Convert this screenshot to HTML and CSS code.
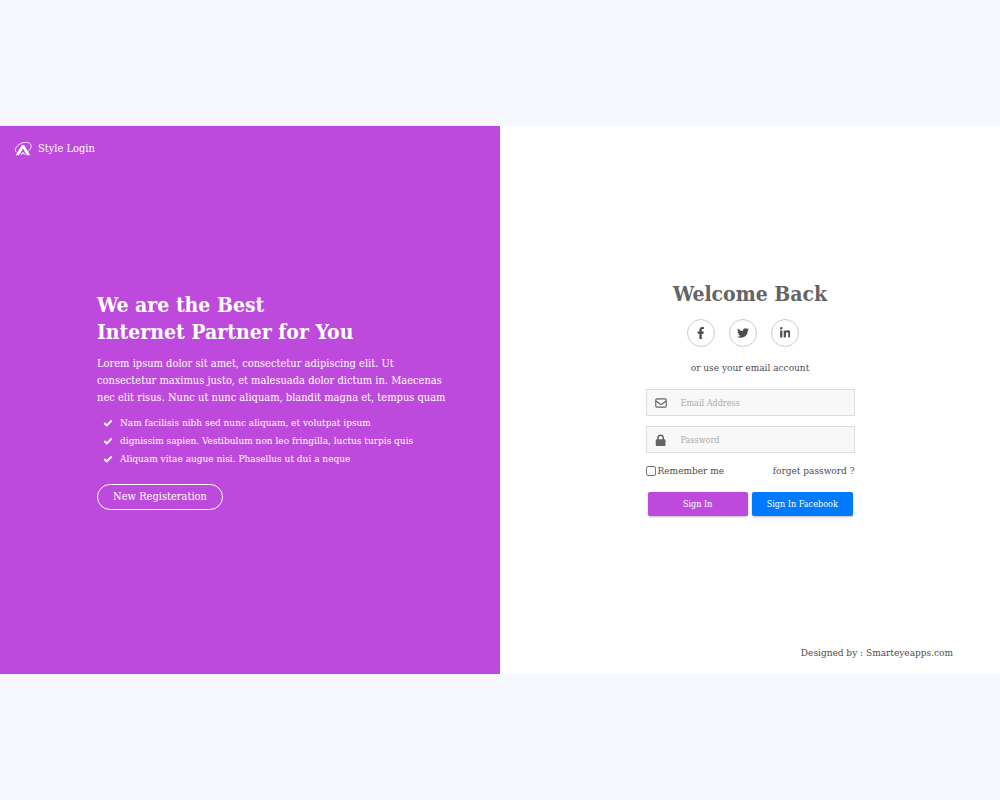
FILE: index.html
```
<!DOCTYPE html>
<html lang="en">
<head>
<meta charset="utf-8">
<meta name="viewport" content="width=device-width, initial-scale=1">
<title>Style Login</title>
<link rel="stylesheet" href="styles.css">
</head>
<body>
<main class="login">
  <section class="intro">
    <div class="brand">
      <svg class="brand-logo" viewBox="0 0 34 28" aria-hidden="true">
        <path d="M3 25 14 7h4l11 18h-6L16 13 9 25zM11 25l5-6 5 6-3-1-2-2-2 2z" fill="currentColor"/>
        <path d="M4 20C-1 14 6 6 15 3c12-3 18 2 15 9-1 3-3 5-5 6" fill="none" stroke="currentColor" stroke-width="1.500"/>
      </svg>
      <span>Style Login</span>
    </div>
    <div class="pitch">
      <h1>We are the Best<br>Internet Partner for You</h1>
      <p class="lead">Lorem ipsum dolor sit amet, consectetur adipiscing elit. Ut<br>consectetur maximus justo, et malesuada dolor dictum in. Maecenas<br>nec elit risus. Nunc ut nunc aliquam, blandit magna et, tempus quam</p>
      <ul class="points">
        <li><svg class="check" viewBox="0 0 16 16" aria-hidden="true"><path d="m2 8 4 4 8-8"/></svg>Nam facilisis nibh sed nunc aliquam, et volutpat ipsum</li>
        <li><svg class="check" viewBox="0 0 16 16" aria-hidden="true"><path d="m2 8 4 4 8-8"/></svg>dignissim sapien. Vestibulum non leo fringilla, luctus turpis quis</li>
        <li><svg class="check" viewBox="0 0 16 16" aria-hidden="true"><path d="m2 8 4 4 8-8"/></svg>Aliquam vitae augue nisi. Phasellus ut dui a neque</li>
      </ul>
      <button class="register" type="button">New Registeration</button>
    </div>
  </section>
  <section class="access">
    <form class="form">
      <h2>Welcome Back</h2>
      <div class="social">
        <a href="#" aria-label="Facebook"><svg viewBox="0 0 320 512"><path d="M279 288l14-93h-89v-60c0-25 12-50 52-50h41V7s-37-7-72-7c-73 0-121 44-121 125v70H23v93h81v224h100V288z"/></svg></a>
        <a href="#" aria-label="Twitter"><svg viewBox="0 0 512 512"><path d="M459.400 151.700c.3 4.500.3 9.100.3 13.600 0 138.700-105.600 298.600-298.600 298.600-59.500 0-114.700-17.200-161.100-47.100 8.400 1 16.600 1.300 25.300 1.300 49.100 0 94.200-16.600 130.300-44.800-46.100-1-84.800-31.200-98.100-72.800 6.500 1 13 1.600 19.800 1.600 9.400 0 18.800-1.300 27.600-3.600-48.100-9.700-84.100-52-84.100-103v-1.300c14 7.800 30.200 12.700 47.400 13.300-28.300-18.800-46.800-51-46.800-87.400 0-19.500 5.200-37.400 14.300-53 51.700 63.700 129.300 105.300 216.400 109.800-1.600-7.800-2.600-15.900-2.600-24 0-57.800 46.800-104.900 104.900-104.900 30.200 0 57.500 12.700 76.700 33.100 23.700-4.500 46.500-13.300 66.600-25.300-7.800 24.400-24.400 44.800-46.100 57.800 21.100-2.300 41.600-8.100 60.400-16.200-14.300 20.800-32.200 39.300-52.600 54.300z"/></svg></a>
        <a href="#" aria-label="LinkedIn"><svg viewBox="0 0 448 512"><path d="M100 448H7V149h93zM54 108a54 54 0 1 1 0-108 54 54 0 0 1 0 108zM448 448h-93V302c0-35-1-79-49-79-48 0-55 38-55 77v148h-93V149h89v41h1c13-24 43-49 88-49 94 0 112 62 112 143z"/></svg></a>
      </div>
      <p class="hint">or use your email account</p>
      <label class="field">
        <svg viewBox="0 0 16 16" aria-hidden="true"><path d="M2.500 2.500h11q1.500 0 1.500 1.500v8q0 1.500-1.500 1.500h-11Q1 13.500 1 12V4q0-1.500 1.500-1.500zM1 5l5 4q2 1.500 4 0l5-4" fill="none" stroke="currentColor" stroke-width="1.500"/></svg>
        <input type="email" placeholder="Email Address" aria-label="Email Address">
      </label>
      <label class="field">
        <svg viewBox="0 0 16 16" aria-hidden="true"><path d="M3 7V5a4.500 4.500 0 0 1 9 0v2h.5Q14 7 14 8.500v6q0 1.500-1.500 1.500h-10Q1 16 1 14.500v-6Q1 7 2.500 7zm2 0h5V5a2.500 2.500 0 0 0-5 0z" fill="currentColor"/></svg>
        <input type="password" placeholder="Password" aria-label="Password">
      </label>
      <div class="options">
        <label class="remember"><input type="checkbox">Remember me</label>
        <a href="#">forget password ?</a>
      </div>
      <div class="actions">
        <button class="btn btn-main" type="button">Sign In</button>
        <button class="btn btn-facebook" type="button">Sign In Facebook</button>
      </div>
    </form>
    <footer class="credit">Designed by : <a href="#">Smarteyeapps.com</a></footer>
  </section>
</main>
</body>
</html>
```
FILE: styles.css
```
* { box-sizing: border-box; }
body {
  margin: 0;
  min-height: 100vh;
  display: flex;
  align-items: center;
  background: #f7f8ff;
  color: #4c4c4c;
  font-family: "Roboto Slab", "DejaVu Serif Condensed", "DejaVu Serif", serif;
  font-size: 10px;
}
h1, h2, p, ul { margin: 0; padding: 0; }
a { color: inherit; text-decoration: none; }
button, input { font: inherit; }

.login {
  width: 100%;
  min-height: 68.4vh;
  display: grid;
  grid-template-columns: 1fr 1fr;
  background: #fff;
}
.intro, .access {
  display: grid;
  grid-template-rows: 1fr auto 1fr;
}
.intro { background: #bd4adc; color: #fff; }
.brand {
  display: flex;
  align-items: center;
  align-self: start;
  gap: 5px;
  padding: 14px;
  font-size: 11px;
  line-height: 18px;
}
.brand-logo { width: 19px; height: 16px; }
.pitch {
  grid-row: 2;
  padding-left: 97px;
  white-space: nowrap;
}
h1 { font-size: 21px; line-height: 27px; }
.lead { margin-top: 10px; font-size: 11px; line-height: 17px; }
.points {
  margin-top: 8px;
  list-style: none;
  font-size: 10px;
  line-height: 18px;
}
.points li { display: flex; align-items: center; gap: 7px; padding-left: 6px; }
.check {
  width: 10px;
  height: 10px;
  fill: none;
  stroke: currentColor;
  stroke-width: 3;
}
.register {
  margin-top: 16px;
  padding: 3px 15px;
  border: 1px solid #fff;
  border-radius: 13px;
  background: transparent;
  color: inherit;
  font-size: 11px;
  line-height: 18px;
}

.form {
  grid-row: 2;
  justify-self: center;
  width: 209px;
  padding-bottom: 4px;
}
h2 {
  color: #646464;
  font-size: 21px;
  line-height: 28px;
  text-align: center;
  white-space: nowrap;
}
.social {
  display: flex;
  justify-content: center;
  gap: 14px;
  margin-top: 11px;
  padding-right: 14px;
}
.social a {
  display: grid;
  place-items: center;
  width: 28px;
  height: 28px;
  border: 1px solid #ccc;
  border-radius: 50%;
}
.social svg { height: 12px; fill: #4c4c4c; }
.hint { margin: 13px 0; line-height: 16px; text-align: center; }
.field {
  display: flex;
  align-items: center;
  gap: 14px;
  height: 27px;
  margin-bottom: 10px;
  padding: 0 8px;
  border: 1px solid #ddd;
  background: #f8f8f8;
}
.field svg { flex: none; width: 12px; height: 12px; color: #646464; }
.field input {
  width: 100%;
  min-width: 0;
  padding: 0;
  border: 0;
  outline: 0;
  background: transparent;
  font-size: 9px;
}
.field input::placeholder { color: #aaa; opacity: 1; }
.options {
  display: flex;
  justify-content: space-between;
  line-height: 16px;
  white-space: nowrap;
}
.remember { display: flex; align-items: center; gap: 2px; }
.remember input {
  appearance: none;
  width: 10px;
  height: 10px;
  margin: 0;
  border: 1px solid #777;
  border-radius: 2px;
  background: #fff;
}
.remember input:checked { background: #bd4adc; }
.actions {
  display: grid;
  grid-template-columns: 1fr 1fr;
  gap: 4px;
  margin-top: 13px;
  padding: 0 2px;
}
.btn {
  height: 24px;
  padding: 0;
  border: 0;
  border-radius: 2px;
  box-shadow: 0 1px 2px #0004;
  color: #fff;
  font-size: 9px;
  white-space: nowrap;
}
.btn-main { background: #bd4adc; }
.btn-facebook { background: #007bff; }
.credit {
  grid-row: 3;
  align-self: end;
  justify-self: end;
  padding: 0 47px 13px 0;
  line-height: 16px;
}
```
